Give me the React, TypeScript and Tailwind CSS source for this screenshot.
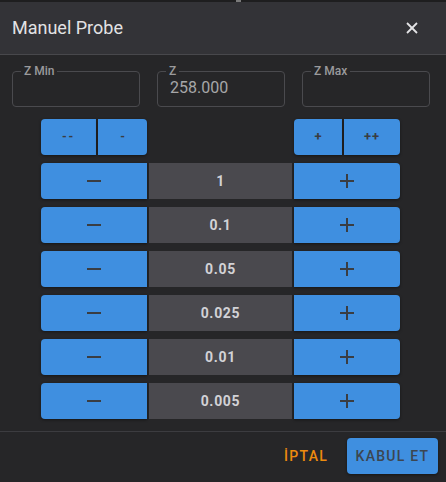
import React from "react";

const steps = ["1", "0.1", "0.05", "0.025", "0.01", "0.005"];

function MinusIcon() {
  return (
    <svg width="16" height="16" viewBox="0 0 16 16">
      <line x1="1" y1="8" x2="15" y2="8" stroke="#3a3d42" strokeWidth="2" />
    </svg>
  );
}

function PlusIcon() {
  return (
    <svg width="16" height="16" viewBox="0 0 16 16">
      <line x1="1" y1="8" x2="15" y2="8" stroke="#3a3d42" strokeWidth="2" />
      <line x1="8" y1="1" x2="8" y2="15" stroke="#3a3d42" strokeWidth="2" />
    </svg>
  );
}

function Field({ label, value }: { label: string; value?: string }) {
  return (
    <fieldset className="h-[42px] border border-[#4a4a4e] rounded-[4px]">
      <legend className="ml-[8px] px-[3px] text-[12px] leading-[12px] font-medium text-[#9a9a9c]">
        {label}
      </legend>
      <div className="px-[12px] text-[16px] leading-[20px] text-[#a6a6a8] mt-[1px]">
        {value ?? ""}
      </div>
    </fieldset>
  );
}

export default function App() {
  const btn =
    "bg-[#3f8fe0] flex items-center justify-center shadow-[0_1px_3px_rgba(0,0,0,0.45)]";

  return (
    <div
      className="w-[446px] h-[482px] bg-[#1e1e1f] flex flex-col relative overflow-hidden"
      style={{ fontFamily: "Roboto, 'Liberation Sans', sans-serif" }}
    >
      {/* top strip marker */}
      <div className="h-[2px] shrink-0 bg-[#1e1e1f]">
        <div className="absolute top-0 left-[236px] w-[5px] h-[2px] bg-[#7a7a7a]" />
      </div>

      {/* header */}
      <div className="h-[53px] shrink-0 bg-[#333337] border-b border-[#48484c] flex items-center justify-between pl-[12px] pr-[28px]">
        <span className="text-[18px] text-[#e2e2e4] leading-none">Manuel Probe</span>
        <svg width="12" height="12" viewBox="0 0 12 12">
          <line x1="1" y1="1" x2="11" y2="11" stroke="#e4e4e6" strokeWidth="1.8" />
          <line x1="11" y1="1" x2="1" y2="11" stroke="#e4e4e6" strokeWidth="1.8" />
        </svg>
      </div>

      {/* body */}
      <div className="flex-1 bg-[#262628] flex flex-col">
        <div className="pt-[10px] pl-[12px] pr-[16px] grid grid-cols-3 gap-[17px]">
          <Field label="Z Min" />
          <Field label="Z" value="258.000" />
          <Field label="Z Max" />
        </div>

        <div className="mt-[12px] ml-[41px] w-[359px] flex flex-col gap-[8px]">
          <div className="flex justify-between h-[36px]">
            <div className="flex gap-[2px]">
              <div className={`${btn} w-[55px] rounded-l-[4px] text-[12px] font-bold tracking-[0.15em] text-[#3a3d42]`}>--</div>
              <div className={`${btn} w-[49px] rounded-r-[4px] text-[12px] font-bold text-[#3a3d42]`}>-</div>
            </div>
            <div className="flex gap-[2px]">
              <div className={`${btn} w-[48px] rounded-l-[4px] text-[13px] font-bold text-[#3a3d42]`}>+</div>
              <div className={`${btn} w-[56px] rounded-r-[4px] text-[13px] font-bold tracking-[0.08em] text-[#3a3d42]`}>++</div>
            </div>
          </div>

          {steps.map((s) => (
            <div key={s} className="flex gap-[2px] h-[36px]">
              <div className={`${btn} w-[106px] rounded-l-[4px]`}>
                <MinusIcon />
              </div>
              <div className="flex-1 bg-[#4a494e] flex items-center justify-center text-[14px] font-bold tracking-[0.05em] text-[#d2d2d6]">
                {s}
              </div>
              <div className={`${btn} w-[106px] rounded-r-[4px]`}>
                <PlusIcon />
              </div>
            </div>
          ))}
        </div>

        <div className="mt-[12px] border-t border-[#3c3c40] flex-1 flex items-center justify-end pr-[8px] pb-[2px]">
          <button className="h-[36px] px-[8px] mr-[11px] text-[14px] font-medium tracking-[0.09em] text-[#ee8b0e]">
            İPTAL
          </button>
          <button className="h-[36px] w-[91px] rounded-[4px] bg-[#3f8fe0] text-[14px] font-medium tracking-[0.09em] text-[#3c4650] shadow-[0_1px_3px_rgba(0,0,0,0.45)]">
            KABUL ET
          </button>
        </div>
      </div>
    </div>
  );
}
